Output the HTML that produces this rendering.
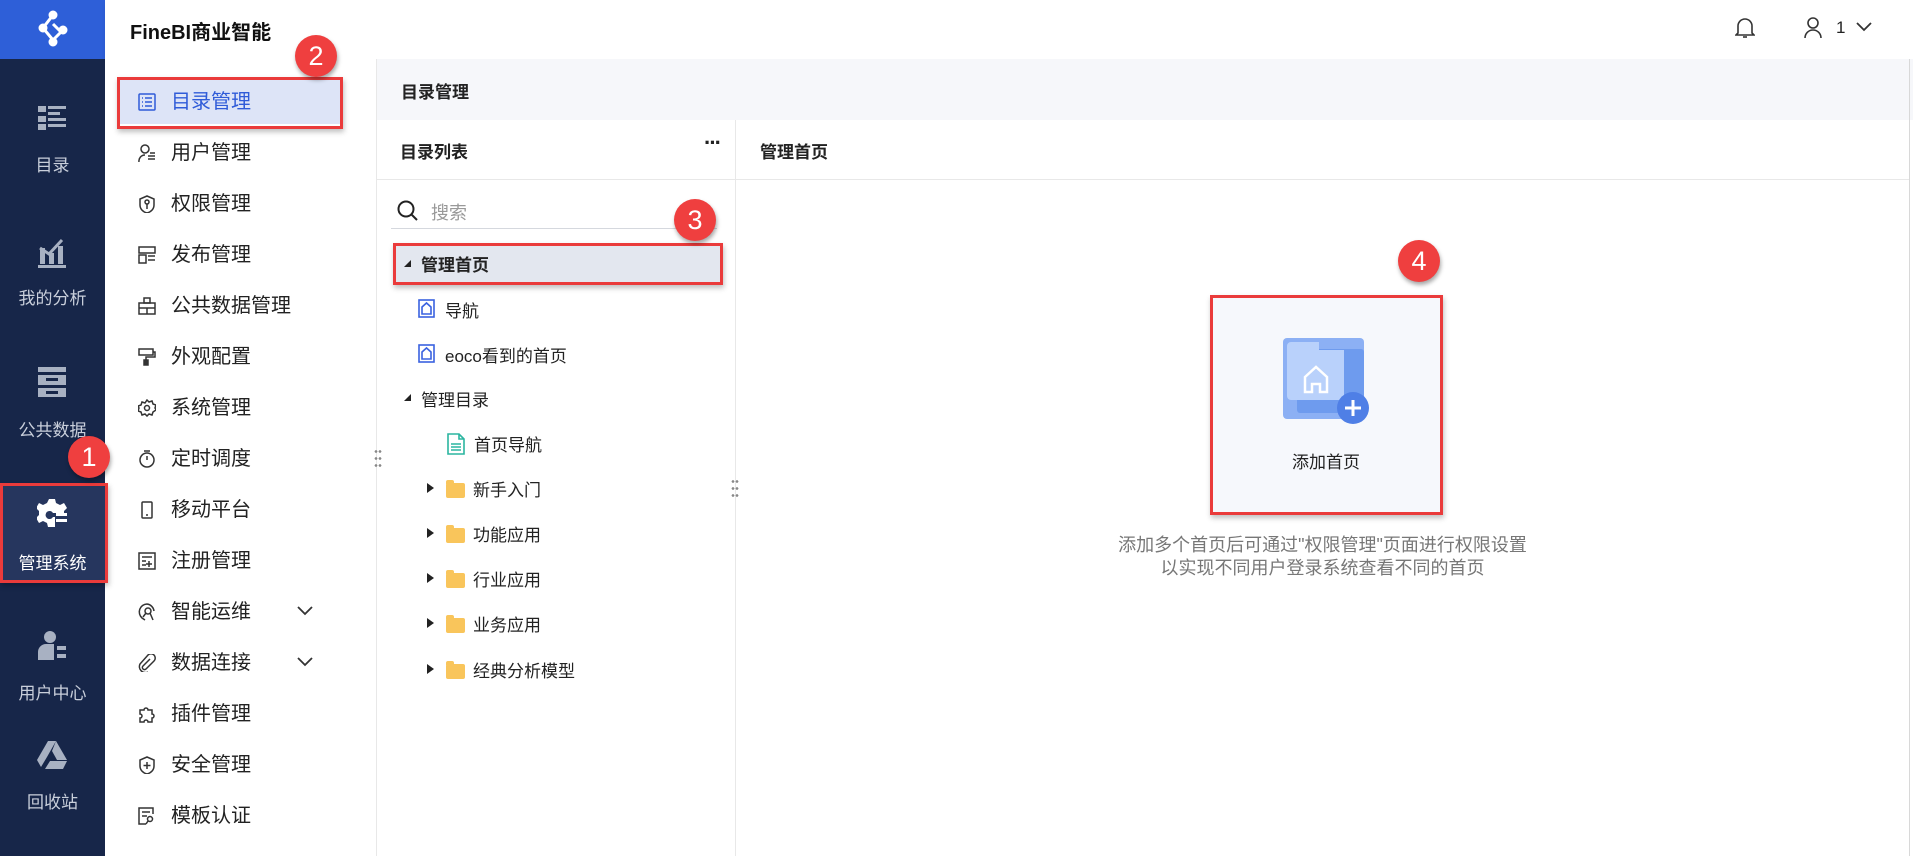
<!DOCTYPE html>
<html><head><meta charset="utf-8"><style>
*{margin:0;padding:0;box-sizing:border-box}
body{width:1913px;height:856px;overflow:hidden;background:#fff;font-family:"Liberation Sans","Noto Sans CJK SC",sans-serif;color:#222;position:relative}
.abs{position:absolute}
#side{left:0;top:0;width:105px;height:856px;background:#172649}
#logo{left:0;top:0;width:105px;height:59px;background:#2e5fd8}
.si{position:absolute;left:0;width:105px;text-align:center;color:#c9cfdb;font-size:17px}
#hdr{left:105px;top:0;width:1808px;height:59px;background:#fff;box-shadow:0 2px 4px rgba(0,0,0,.06)}
#nav{left:105px;top:59px;width:271px;height:797px;background:#fff}
.ni{position:absolute;left:0;width:271px;height:44px;font-size:20px;color:#222;line-height:44px}
.ni svg{position:absolute;left:33px;top:13px}
.ni span{position:absolute;left:66px}
#bar{left:376px;top:59px;width:1537px;height:61px;background:#f6f7fa;border-left:1px solid #e8e8e8}
.tr{position:absolute;font-size:17px;color:#222}
.badge{position:absolute;width:42px;height:42px;border-radius:50%;background:#ef3f3f;color:#fff;font-size:27px;text-align:center;line-height:42px;box-shadow:1px 3px 4px rgba(0,0,0,.35)}
.rb{position:absolute;border:3px solid #ea3b3b;box-shadow:1px 3px 5px rgba(0,0,0,.25)}
.fold{position:absolute;width:19px;height:15px;background:#f9c55b;border-radius:2px}
.fold:before{content:"";position:absolute;left:0;top:-3px;width:8px;height:4px;background:#f9c55b;border-radius:2px 2px 0 0}
.tri{position:absolute;width:0;height:0;border-left:7px solid #222;border-top:5px solid transparent;border-bottom:5px solid transparent}
.dots{position:absolute;width:8px;height:20px;background-image:radial-gradient(circle,#888 1.2px,transparent 1.5px);background-size:4px 7px}
</style></head><body>
<div id="side" class="abs">
 <div id="logo" class="abs">
  <svg class="abs" style="left:33px;top:10px" width="40" height="40" viewBox="0 0 40 40" fill="none" stroke="#fff" stroke-width="3"><path d="M20 5 L10 18 L20 30 L28 22 L20 14"/><circle cx="20" cy="5" r="3" fill="#fff"/><circle cx="10" cy="18" r="3" fill="#fff"/><circle cx="20" cy="32" r="3" fill="#fff"/><circle cx="30" cy="20" r="3" fill="#fff"/></svg>
 </div>
 <svg class="abs" style="left:38px;top:106px" width="28" height="26" viewBox="0 0 28 26" fill="#a8b1c2"><rect x="0" y="0" width="8" height="6"/><rect x="10" y="0" width="18" height="3"/><rect x="10" y="6" width="12" height="3"/><rect x="0" y="10" width="8" height="6" /><rect x="0" y="18" width="8" height="6"/><rect x="10" y="18" width="18" height="3"/><rect x="10" y="12" width="18" height="3"/></svg>
 <div class="si" style="top:151px">目录</div>
 <svg class="abs" style="left:38px;top:238px" width="28" height="30" viewBox="0 0 28 30" fill="#a8b1c2"><rect x="2" y="10" width="5" height="16"/><rect x="11" y="15" width="5" height="11"/><rect x="20" y="8" width="5" height="18"/><rect x="0" y="27" width="28" height="3"/><path d="M2 10 L11 16 L24 2" stroke="#a8b1c2" stroke-width="3" fill="none"/></svg>
 <div class="si" style="top:284px">我的分析</div>
 <svg class="abs" style="left:38px;top:367px" width="28" height="30" viewBox="0 0 28 30" fill="#a8b1c2"><rect x="0" y="0" width="28" height="5"/><rect x="0" y="8" width="28" height="10"/><rect x="0" y="21" width="28" height="9"/><rect x="8" y="11" width="12" height="3" fill="#172649"/><rect x="8" y="24" width="12" height="3" fill="#172649"/></svg>
 <div class="si" style="top:416px">公共数据</div>
 <div class="abs" style="left:0;top:483px;width:105px;height:99px;background:#26365e"></div>
 <svg class="abs" style="left:37px;top:497px" width="30" height="30" viewBox="0 0 30 30" fill="#fff"><path d="M12 2h6l1 4 4 2 4-2 3 5-3 3v2H16a4 4 0 1 0 0 4h2v10h-1l-1 0-1 0h-4l-1-4-4-2-4 2-3-5 3-3v-4l-3-3 3-5 4 2 4-2z"/><rect x="19" y="16" width="11" height="3"/><rect x="19" y="22" width="11" height="3"/></svg>
 <div class="si" style="top:549px;color:#fff">管理系统</div>
 <svg class="abs" style="left:38px;top:630px" width="28" height="30" viewBox="0 0 28 30" fill="#a8b1c2"><circle cx="12" cy="7" r="6"/><path d="M0 30v-8a8 8 0 0 1 8-8h8v16z"/><rect x="19" y="16" width="9" height="4"/><rect x="19" y="24" width="9" height="4"/></svg>
 <div class="si" style="top:679px">用户中心</div>
 <svg class="abs" style="left:37px;top:741px" width="30" height="28" viewBox="0 0 30 28" fill="#a8b1c2"><path d="M11 0h8l-9 16-6 10-4-7z"/><path d="M19 0l11 19h-10l-5-9z"/><path d="M8 28l5-8h17l-4 8z"/></svg>
 <div class="si" style="top:788px">回收站</div>
</div>
<div id="hdr" class="abs">
 <div class="abs" style="left:25px;top:16px;font-size:20px;font-weight:bold;color:#111">FineBI商业智能</div>
 <svg class="abs" style="left:1630px;top:17px" width="20" height="22" viewBox="0 0 20 22" fill="none" stroke="#333" stroke-width="1.6"><path d="M3 16V9a7 7 0 0 1 14 0v7l2 2H1z"/><path d="M8 20h4"/></svg>
 <svg class="abs" style="left:1698px;top:17px" width="20" height="22" viewBox="0 0 20 22" fill="none" stroke="#333" stroke-width="1.6"><circle cx="10" cy="6" r="5"/><path d="M2 21a8 8 0 0 1 16 0"/></svg>
 <div class="abs" style="left:1731px;top:18px;font-size:17px">1</div>
 <svg class="abs" style="left:1751px;top:22px" width="16" height="10" viewBox="0 0 16 10" fill="none" stroke="#333" stroke-width="1.8"><path d="M1 1l7 7 7-7"/></svg>
</div>
<div id="nav" class="abs">
 <div class="ni" style="top:21px;background:#dde4f7;color:#2f5bd8;left:12px;width:225px"><svg style="left:21px" width="18" height="18" viewBox="0 0 18 18" fill="none" stroke="#2f5bd8" stroke-width="1.5"><rect x="1" y="1" width="16" height="16" rx="1"/><path d="M4 5h1M7 5h7M4 9h1M7 9h7M4 13h1M7 13h7"/></svg><span style="left:54px">目录管理</span></div>
 <div class="ni" style="top:72px"><svg width="18" height="18" viewBox="0 0 18 18" fill="none" stroke="#333" stroke-width="1.5"><circle cx="7" cy="5" r="4"/><path d="M1 18a6 6 0 0 1 6-7M10 12h7M10 15h7M12 9h5"/></svg><span>用户管理</span></div>
 <div class="ni" style="top:123px"><svg width="18" height="18" viewBox="0 0 18 18" fill="none" stroke="#333" stroke-width="1.5"><path d="M9 1l7 3v6c0 4-3 7-7 8-4-1-7-4-7-8V4z"/><circle cx="9" cy="7" r="2"/><path d="M9 9v5"/></svg><span>权限管理</span></div>
 <div class="ni" style="top:174px"><svg width="18" height="18" viewBox="0 0 18 18" fill="none" stroke="#333" stroke-width="1.5"><rect x="1" y="1" width="16" height="6"/><rect x="1" y="9" width="7" height="8"/><path d="M10 10h7M10 14h7"/></svg><span>发布管理</span></div>
 <div class="ni" style="top:225px"><svg width="18" height="18" viewBox="0 0 18 18" fill="none" stroke="#333" stroke-width="1.5"><rect x="1" y="6" width="16" height="11"/><rect x="6" y="1" width="6" height="5"/><path d="M1 11h16M9 11v6"/></svg><span>公共数据管理</span></div>
 <div class="ni" style="top:276px"><svg width="18" height="18" viewBox="0 0 18 18" fill="none" stroke="#333" stroke-width="1.5"><rect x="1" y="1" width="14" height="6"/><path d="M15 4h2v5H8v3"/><rect x="6" y="12" width="4" height="5" fill="#333"/></svg><span>外观配置</span></div>
 <div class="ni" style="top:327px"><svg width="18" height="18" viewBox="0 0 18 18" fill="none" stroke="#333" stroke-width="1.5"><path d="M9 1l2 2 3-1 1 3 3 1-1 3 1 2-3 2-1 3-3-1-2 2-2-2-3 1-1-3-3-1 1-3-1-2 3-1 1-3 3 1z"/><circle cx="9" cy="9" r="2.5"/></svg><span>系统管理</span></div>
 <div class="ni" style="top:378px"><svg width="18" height="18" viewBox="0 0 18 18" fill="none" stroke="#333" stroke-width="1.5"><circle cx="9" cy="10" r="7"/><path d="M6 1h6M9 10V6"/></svg><span>定时调度</span></div>
 <div class="ni" style="top:429px"><svg width="18" height="18" viewBox="0 0 18 18" fill="none" stroke="#333" stroke-width="1.5"><rect x="4" y="1" width="10" height="16" rx="1"/><path d="M8 14h2"/></svg><span>移动平台</span></div>
 <div class="ni" style="top:480px"><svg width="18" height="18" viewBox="0 0 18 18" fill="none" stroke="#333" stroke-width="1.5"><rect x="1" y="1" width="16" height="16"/><path d="M4 5h10M4 9h4M4 13h4M11 9v6M8 12h6"/></svg><span>注册管理</span></div>
 <div class="ni" style="top:531px"><svg width="18" height="18" viewBox="0 0 18 18" fill="none" stroke="#333" stroke-width="1.5"><path d="M9 1a8 8 0 0 0-5 14l3 2M9 1a8 8 0 0 1 7 7"/><circle cx="10" cy="8" r="3"/><path d="M8 10l-3 4M12 10l3 7"/></svg><span>智能运维</span><svg style="left:192px;top:16px" width="16" height="10" viewBox="0 0 16 10" fill="none" stroke="#333" stroke-width="1.8"><path d="M1 1l7 7 7-7"/></svg></div>
 <div class="ni" style="top:582px"><svg width="18" height="18" viewBox="0 0 18 18" fill="none" stroke="#333" stroke-width="1.5"><path d="M12 5L5 12a2 2 0 0 0 3 3l8-8a4 4 0 0 0-6-6L2 10a6 6 0 0 0 8 8"/></svg><span>数据连接</span><svg style="left:192px;top:16px" width="16" height="10" viewBox="0 0 16 10" fill="none" stroke="#333" stroke-width="1.8"><path d="M1 1l7 7 7-7"/></svg></div>
 <div class="ni" style="top:633px"><svg width="18" height="18" viewBox="0 0 18 18" fill="none" stroke="#333" stroke-width="1.5"><path d="M2 5h4a2 2 0 1 1 4 0h4v4a2 2 0 1 1 0 4v4H10a2 2 0 1 0-4 0H2v-4a2 2 0 1 0 0-4z"/></svg><span>插件管理</span></div>
 <div class="ni" style="top:684px"><svg width="18" height="18" viewBox="0 0 18 18" fill="none" stroke="#333" stroke-width="1.5"><path d="M9 1l7 3v6c0 4-3 7-7 8-4-1-7-4-7-8V4z"/><path d="M9 6v7M5.5 9.5h7"/></svg><span>安全管理</span></div>
 <div class="ni" style="top:735px"><svg width="18" height="18" viewBox="0 0 18 18" fill="none" stroke="#333" stroke-width="1.5"><path d="M8 17H1V1h14v6M4 5h8M4 9h5"/><circle cx="12" cy="12" r="2.5"/><path d="M10 14l-2 3"/></svg><span>模板认证</span></div>
</div>
<div id="bar" class="abs"><div class="abs" style="left:24px;top:19px;font-size:17px;font-weight:bold">目录管理</div></div>
<div class="abs" style="left:376px;top:120px;width:1px;height:736px;background:#e8e8e8"></div>
<div class="abs" style="left:735px;top:120px;width:1px;height:736px;background:#e8e8e8"></div>
<div class="abs" style="left:1909px;top:59px;width:1px;height:797px;background:#d8d8d8"></div>
<div class="abs" style="left:377px;top:179px;width:1532px;height:1px;background:#e8e8e8"></div>
<div class="abs" style="left:400px;top:138px;font-size:17px;font-weight:bold">目录列表</div>
<div class="abs" style="left:704px;top:132px;font-size:22px;font-weight:bold;letter-spacing:-2px;line-height:22px">···</div>
<div class="abs" style="left:760px;top:138px;font-size:17px;font-weight:bold">管理首页</div>
<svg class="abs" style="left:397px;top:200px" width="22" height="22" viewBox="0 0 22 22" fill="none" stroke="#222" stroke-width="2"><circle cx="9" cy="9" r="7.5"/><path d="M14.5 14.5L20 20"/></svg>
<div class="abs" style="left:431px;top:199px;font-size:18px;color:#999">搜索</div>
<div class="abs" style="left:391px;top:228px;width:326px;height:1px;background:#d5d8de"></div>
<div class="abs" style="left:393px;top:245px;width:328px;height:38px;background:#e3e7ef"></div>
<div class="tri" style="left:404px;top:260px;border-left:0;border-bottom:7px solid #222;border-left:7px solid transparent;border-top:0"></div>
<div class="tr" style="left:421px;top:251px;font-weight:bold">管理首页</div>
<svg class="abs" style="left:418px;top:299px" width="17" height="19" viewBox="0 0 17 19" fill="none" stroke="#3a62e0" stroke-width="1.6"><rect x="1" y="1" width="15" height="17"/><path d="M4 15V8l4.5-4L13 8v7z"/></svg>
<div class="tr" style="left:445px;top:297px">导航</div>
<svg class="abs" style="left:418px;top:344px" width="17" height="19" viewBox="0 0 17 19" fill="none" stroke="#3a62e0" stroke-width="1.6"><rect x="1" y="1" width="15" height="17"/><path d="M4 15V8l4.5-4L13 8v7z"/></svg>
<div class="tr" style="left:445px;top:342px">eoco看到的首页</div>
<div class="tri" style="left:404px;top:394px;border-left:7px solid transparent;border-bottom:7px solid #222;border-top:0"></div>
<div class="tr" style="left:421px;top:386px">管理目录</div>
<svg class="abs" style="left:447px;top:433px" width="18" height="22" viewBox="0 0 18 22" fill="none" stroke="#2bb5a0" stroke-width="1.6"><path d="M1 1h11l5 5v15H1z"/><path d="M12 1v5h5M4 11h10M4 14h10M4 17h10"/></svg>
<div class="tr" style="left:474px;top:431px">首页导航</div>
<div class="tri" style="left:427px;top:483px"></div><div class="fold" style="left:446px;top:483px"></div><div class="tr" style="left:473px;top:476px">新手入门</div>
<div class="tri" style="left:427px;top:528px"></div><div class="fold" style="left:446px;top:528px"></div><div class="tr" style="left:473px;top:521px">功能应用</div>
<div class="tri" style="left:427px;top:573px"></div><div class="fold" style="left:446px;top:573px"></div><div class="tr" style="left:473px;top:566px">行业应用</div>
<div class="tri" style="left:427px;top:618px"></div><div class="fold" style="left:446px;top:618px"></div><div class="tr" style="left:473px;top:611px">业务应用</div>
<div class="tri" style="left:427px;top:664px"></div><div class="fold" style="left:446px;top:664px"></div><div class="tr" style="left:473px;top:657px">经典分析模型</div>
<div class="dots" style="left:374px;top:448px"></div>
<div class="dots" style="left:731px;top:478px"></div>
<div class="abs" style="left:1211px;top:296px;width:230px;height:216px;background:#f6f8fc"></div>
<svg class="abs" style="left:1283px;top:337px" width="90" height="90" viewBox="0 0 90 90"><rect x="0" y="1" width="81" height="81" rx="4" fill="#8cb0f4"/><rect x="14" y="12" width="67" height="64" rx="3" fill="#6e9bee"/><path d="M4 9a4 4 0 0 1 4-4h28v8h25v50H8a4 4 0 0 1-4-4z" fill="#b9d1fb"/><path d="M22 55V40l11-10 11 10v15h-7v-8h-8v8z" fill="none" stroke="#fff" stroke-width="2.5"/><circle cx="70" cy="71" r="16" fill="#4f7fe6"/><path d="M70 63v16M62 71h16" stroke="#fff" stroke-width="3"/></svg>
<div class="abs" style="left:1211px;top:448px;width:230px;text-align:center;font-size:17px;color:#222">添加首页</div>
<div class="abs" style="left:1080px;top:534px;width:485px;text-align:center;font-size:18px;color:#777;line-height:23px">添加多个首页后可通过"权限管理"页面进行权限设置<br>以实现不同用户登录系统查看不同的首页</div>
<div class="rb" style="left:117px;top:77px;width:226px;height:52px"></div>
<div class="rb" style="left:393px;top:243px;width:330px;height:42px"></div>
<div class="rb" style="left:0;top:483px;width:108px;height:100px"></div>
<div class="rb" style="left:1210px;top:295px;width:233px;height:220px"></div>
<div class="badge" style="left:295px;top:35px">2</div>
<div class="badge" style="left:674px;top:199px">3</div>
<div class="badge" style="left:1398px;top:240px">4</div>
<div class="badge" style="left:68px;top:436px">1</div>
</body></html>
